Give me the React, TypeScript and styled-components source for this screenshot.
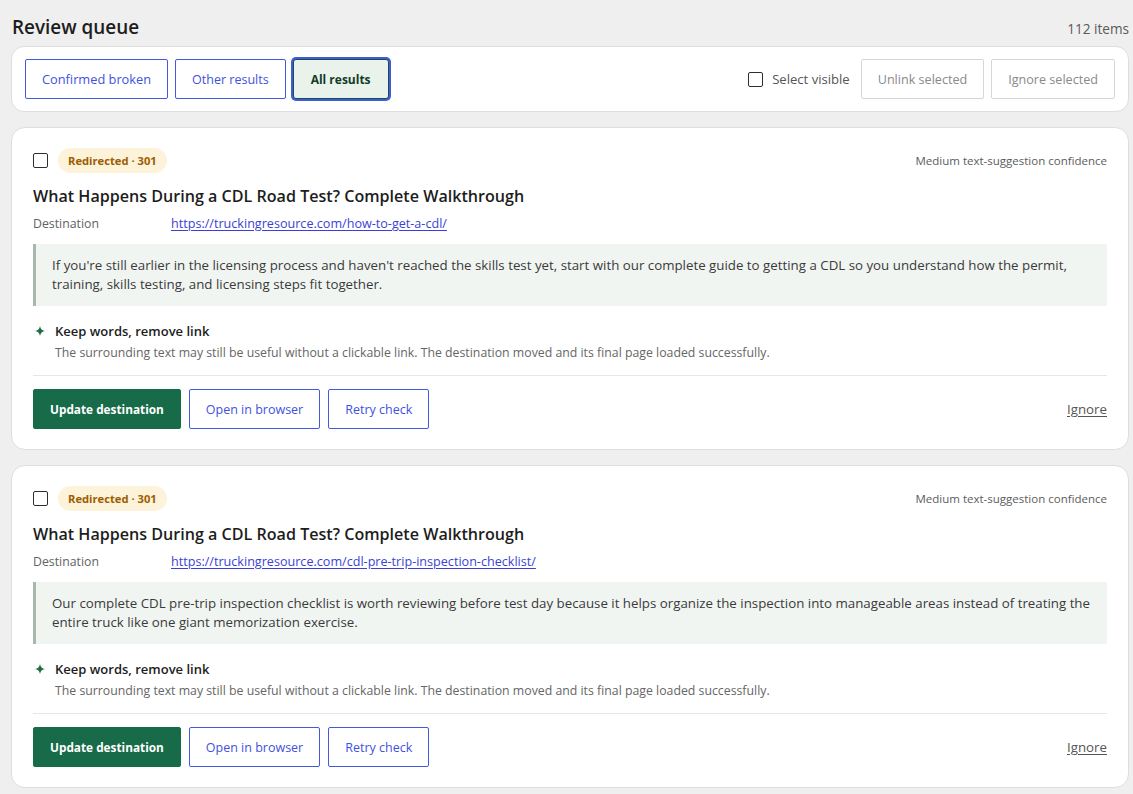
import React from "react";
import styled, { createGlobalStyle } from "styled-components";

const GlobalStyle = createGlobalStyle`
  html, body { margin: 0; padding: 0; background: #efefef; }
  body { font-family: "Open Sans", "Noto Sans", sans-serif; color: #1d1d1d; }
  * { box-sizing: border-box; }
`;

const Page = styled.div`
  display: flex;
  flex-direction: column;
  margin: 0 4px 0 11px;
  padding: 14px 0 7px;
`;

const Header = styled.header`
  display: flex;
  align-items: baseline;
  justify-content: space-between;
  height: 26px;
  margin-bottom: 6px;
`;

const Title = styled.h1`
  margin: 0 0 0 1px;
  font-size: 18.9px;
  font-weight: 600;
  line-height: 26px;
  color: #1d1d1d;
`;

const Count = styled.span`
  font-size: 13.6px;
  color: #5a5a5a;
  line-height: 26px;
`;

const Panel = styled.section`
  background: #fff;
  border: 1px solid #dedede;
  border-radius: 13px;
`;

const Toolbar = styled(Panel)`
  display: flex;
  align-items: center;
  justify-content: space-between;
  padding: 12px 13px;
  margin-bottom: 15px;
`;

const Group = styled.div<{ $gap?: number }>`
  display: flex;
  align-items: center;
  gap: ${(p) => p.$gap ?? 7}px;
`;

type Variant = "outline" | "primary" | "active" | "disabled";

const Button = styled.button<{ $variant?: Variant; $size?: number }>`
  height: 40px;
  padding: 0 16px;
  border-radius: 2px;
  font-family: inherit;
  font-size: ${(p) => p.$size ?? 12.5}px;
  font-weight: 500;
  cursor: pointer;
  white-space: nowrap;
  border: 1px solid #4558e2;
  background: #fff;
  color: #4052e0;
  ${(p) =>
    p.$variant === "primary" &&
    `background: #176b48; border-color: #176b48; color: #fff; font-weight: 700; font-size: 11.8px;`}
  ${(p) =>
    p.$variant === "active" &&
    `background: #e9f3ec; border-color: #1f4e37; color: #153a28; font-weight: 700;
     box-shadow: 0 0 0 2px #3c5ae4; border-radius: 3px; padding: 0 17px;`}
  ${(p) =>
    p.$variant === "disabled" &&
    `border-color: #d6d6d6; color: #8a8a8a; cursor: default;`}
`;

const CheckLabel = styled.label`
  display: flex;
  align-items: center;
  gap: 9px;
  margin-right: 4px;
  font-size: 13.1px;
  color: #555;
`;

const Check = styled.input.attrs({ type: "checkbox" })`
  appearance: none;
  margin: 0;
  width: 15px;
  height: 15px;
  border: 1.5px solid #2e2e2e;
  border-radius: 2px;
  background: #fff;
  flex: none;
`;

const Cards = styled.div`
  display: flex;
  flex-direction: column;
  gap: 15px;
`;

const Card = styled(Panel)`
  display: flex;
  flex-direction: column;
  padding: 20px 21px 20px;
  border-radius: 14px;
`;

const TopRow = styled.div`
  display: flex;
  align-items: center;
  justify-content: space-between;
  height: 25px;
`;

const Badge = styled.span`
  display: inline-flex;
  align-items: center;
  height: 25px;
  padding: 0 10px;
  border-radius: 13px;
  background: #fdf2da;
  color: #9b5e00;
  font-size: 11.2px;
  font-weight: 700;
`;

const Confidence = styled.span`
  font-size: 11.5px;
  color: #5c5c5c;
`;

const CardTitle = styled.h2`
  margin: 11px 0 0;
  font-size: 16.1px;
  font-weight: 600;
  line-height: 24px;
  color: #1d1d1d;
`;

const DetailRow = styled.div`
  display: grid;
  grid-template-columns: 138px 1fr;
  margin-top: 7px;
  line-height: 18px;
  font-size: 12.3px;
`;

const DetailLabel = styled.span`
  color: #626262;
`;

const Link = styled.a`
  color: #3b3fd6;
  font-size: 12.6px;
  text-decoration: underline;
  text-underline-offset: 2px;
`;

const Quote = styled.blockquote`
  margin: 11px 0 0;
  padding: 12px 14px 12px 16px;
  border-left: 3px solid #a8b8ac;
  background: #f1f5f2;
  font-size: 13.3px;
  line-height: 19px;
  color: #3a3a3a;
`;

const Suggestion = styled.div`
  display: grid;
  grid-template-columns: 22px 1fr;
  margin-top: 16px;
`;

const Star = styled.svg`
  width: 10px;
  height: 10px;
  margin: 4px 0 0 2px;
  fill: #1e6b45;
`;

const SuggestionTitle = styled.div`
  font-size: 13px;
  font-weight: 600;
  line-height: 18px;
  color: #1d1d1d;
`;

const SuggestionText = styled.div`
  grid-column: 2;
  margin-top: 4px;
  font-size: 12.3px;
  line-height: 17px;
  color: #666;
`;

const Divider = styled.hr`
  margin: 14px 0 0;
  border: none;
  border-top: 1px solid #e6e6e6;
`;

const Actions = styled.div`
  display: flex;
  align-items: center;
  justify-content: space-between;
  margin-top: 13px;
`;

const TextLink = styled.a`
  font-size: 13.3px;
  color: #555;
  text-decoration: underline;
  text-underline-offset: 2px;
`;

type Item = { url: string; text: string };

const items: Item[] = [
  {
    url: "https://truckingresource.com/how-to-get-a-cdl/",
    text:
      "If you're still earlier in the licensing process and haven't reached the skills test yet, start with our complete guide to getting a CDL so you understand how the permit, training, skills testing, and licensing steps fit together.",
  },
  {
    url: "https://truckingresource.com/cdl-pre-trip-inspection-checklist/",
    text:
      "Our complete CDL pre-trip inspection checklist is worth reviewing before test day because it helps organize the inspection into manageable areas instead of treating the entire truck like one giant memorization exercise.",
  },
];

function ResultCard({ item }: { item: Item }) {
  return (
    <Card>
      <TopRow>
        <Group $gap={10}>
          <Check aria-label="Select item" />
          <Badge>Redirected · 301</Badge>
        </Group>
        <Confidence>Medium text-suggestion confidence</Confidence>
      </TopRow>
      <CardTitle>What Happens During a CDL Road Test? Complete Walkthrough</CardTitle>
      <DetailRow>
        <DetailLabel>Destination</DetailLabel>
        <span>
          <Link href="#">{item.url}</Link>
        </span>
      </DetailRow>
      <Quote>{item.text}</Quote>
      <Suggestion>
        <Star viewBox="0 0 10 10">
          <path d="M5 0 Q5.7 4.3 10 5 Q5.7 5.7 5 10 Q4.3 5.7 0 5 Q4.3 4.3 5 0Z" />
        </Star>
        <SuggestionTitle>Keep words, remove link</SuggestionTitle>
        <SuggestionText>
          The surrounding text may still be useful without a clickable link. The destination moved and its final page loaded successfully.
        </SuggestionText>
      </Suggestion>
      <Divider />
      <Actions>
        <Group $gap={8}>
          <Button $variant="primary">Update destination</Button>
          <Button>Open in browser</Button>
          <Button>Retry check</Button>
        </Group>
        <TextLink href="#">Ignore</TextLink>
      </Actions>
    </Card>
  );
}

export default function App() {
  return (
    <Page>
      <GlobalStyle />
      <Header>
        <Title>Review queue</Title>
        <Count>112 items</Count>
      </Header>
      <Toolbar>
        <Group>
          <Button $size={12.8}>Confirmed broken</Button>
          <Button $size={12.5}>Other results</Button>
          <Button $variant="active" $size={12}>All results</Button>
        </Group>
        <Group>
          <CheckLabel>
            <Check />
            Select visible
          </CheckLabel>
          <Button $variant="disabled" $size={12.6}>Unlink selected</Button>
          <Button $variant="disabled" $size={12.6}>Ignore selected</Button>
        </Group>
      </Toolbar>
      <Cards>
        {items.map((it) => (
          <ResultCard key={it.url} item={it} />
        ))}
      </Cards>
    </Page>
  );
}
